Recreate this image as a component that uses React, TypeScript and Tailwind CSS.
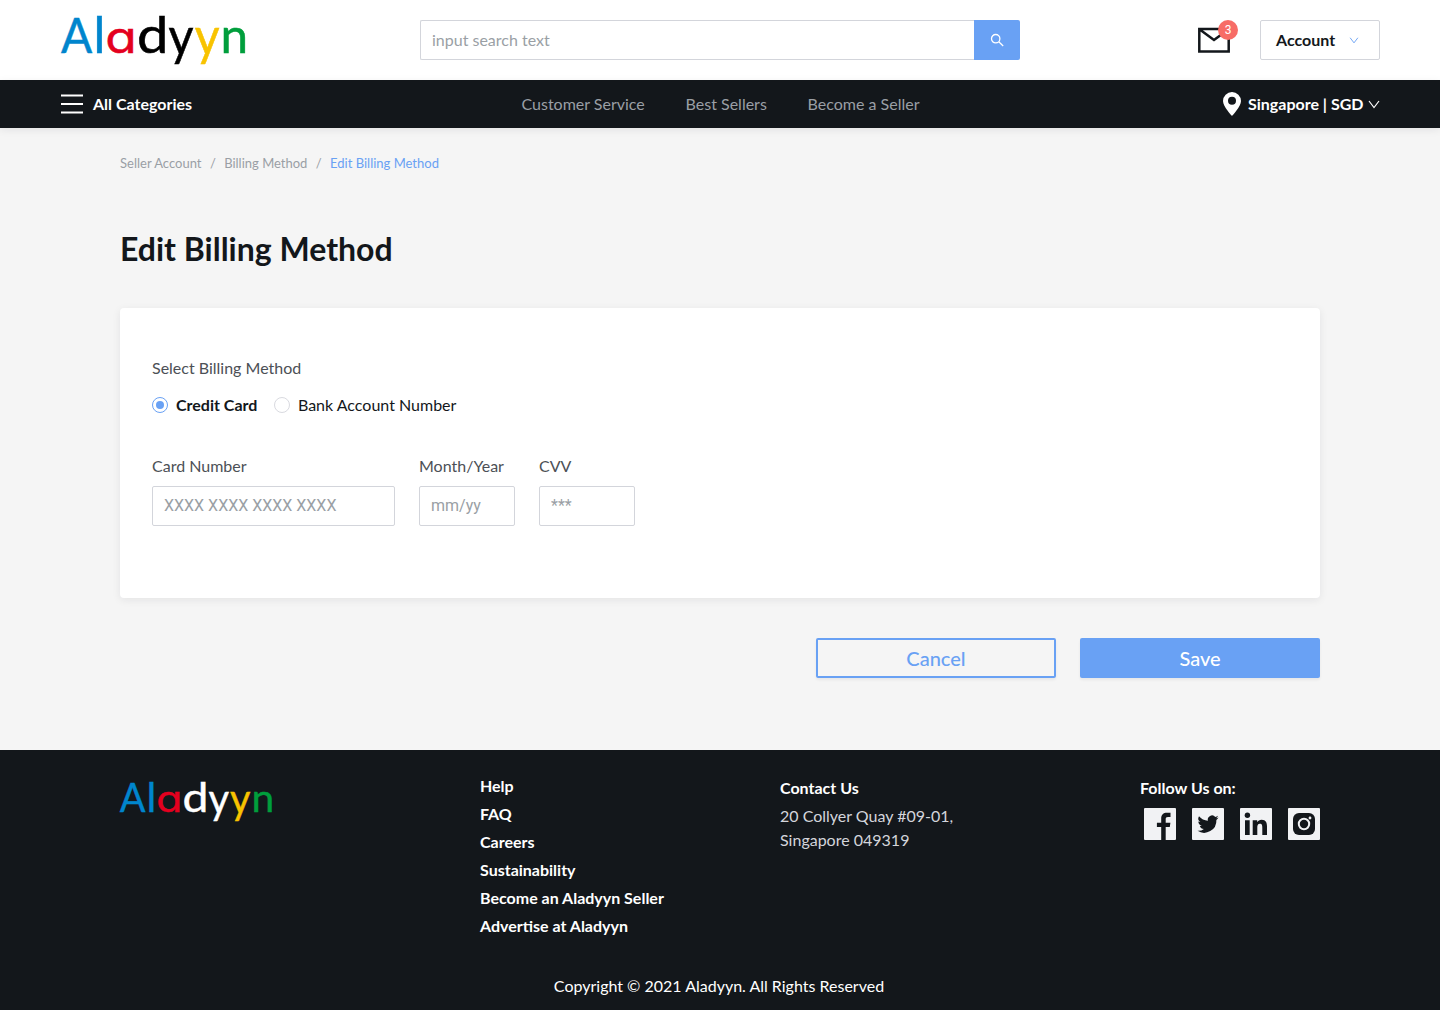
import React from "react";

type Letter = { ch: string; x: number; y: number; sx: number; sy: number; color: string; round?: boolean };

const letters: Letter[] = [
  { ch: "A", x: 76.5, y: 52.5, sx: 0.96, sy: 1.02, color: "#0085cd" },
  { ch: "l", x: 99.4, y: 52.5, sx: 1.05, sy: 1.035, color: "#0085cd" },
  { ch: "a", x: 121, y: 52.5, sx: 1.17, sy: 1, color: "#e4001f", round: true },
  { ch: "d", x: 152.7, y: 52.5, sx: 1.17, sy: 1.03, color: "ink" },
  { ch: "y", x: 181, y: 54.8, sx: 1.01, sy: 1.095, color: "ink" },
  { ch: "y", x: 207, y: 54.8, sx: 1, sy: 1.095, color: "#f8c300" },
  { ch: "n", x: 234.4, y: 52.5, sx: 1.03, sy: 1, color: "#009e3c" },
];

function Logo({ ink, className }: { ink: string; className: string }) {
  return (
    <svg viewBox="60 0 188 80" className={`overflow-visible ${className}`} role="img" aria-label="Aladyyn">
      {letters.map((l, i) => (
        <text
          key={i}
          transform={`translate(${l.x} ${l.y}) scale(${l.sx} ${l.sy})`}
          textAnchor="middle"
          fontSize={l.round ? 44 : 48}
          fill={l.color === "ink" ? ink : l.color}
          stroke={l.color === "ink" ? ink : l.color}
          strokeWidth={0.5}
          className={
            l.round
              ? "font-['Inter',sans-serif] [font-feature-settings:'cv11']"
              : "font-['Lato',sans-serif]"
          }
        >
          {l.ch}
        </text>
      ))}
    </svg>
  );
}

function Chevron({ className }: { className: string }) {
  return (
    <svg viewBox="0 0 12 9" fill="none" stroke="currentColor" className={className}>
      <path d="M1 1 6 7.500 11 1" strokeWidth="1.2" />
    </svg>
  );
}

function Field({ label, hint, className }: { label: string; hint: string; className: string }) {
  return (
    <label className={`block ${className}`}>
      <span className="block leading-6 text-[#4c5056]">{label}</span>
      <input
        placeholder={hint}
        className="mt-2 block h-10 w-full rounded-[2px] border border-[#d3d5db] bg-white px-[11px] pb-px font-['Roboto',sans-serif] outline-none placeholder:text-[#9a9fa5]"
      />
    </label>
  );
}

const socials = [
  <path key="f" d="M17.200 32V19h-4.300v-4.300h4.300v-4C17.200 6.500 19.500 4.800 22.800 4.800h3.700v4.100H24c-1.800 0-2.300.8-2.300 2.300v3.500h4.700l-.6 4.300h-4.100v13z" />,
  <path key="t" d="M26.600 9.500c-.8.350-1.600.6-2.500.7a4.300 4.300 0 0 0 1.900-2.400c-.8.500-1.800.9-2.700 1.100a4.300 4.300 0 0 0-7.400 3.900A12.300 12.300 0 0 1 7 8.300a4.300 4.300 0 0 0 1.300 5.800c-.7 0-1.400-.2-2-.5 0 2.100 1.500 3.900 3.500 4.300-.6.200-1.300.2-2 .1a4.300 4.300 0 0 0 4.100 3A8.700 8.700 0 0 1 5.500 22.800a12.300 12.300 0 0 0 18.900-10.900c.9-.6 1.600-1.400 2.200-2.400z" />,
  <g key="l">
    <circle cx="7.400" cy="7.300" r="2.700" />
    <path d="M5 12.200h4.700V27H5zM12.700 12.200h4.500v2c.8-1.500 2.300-2.400 4.400-2.400 4.400 0 5.400 2.900 5.400 7V27h-4.700v-7.300c0-1.800-.1-3.900-2.400-3.900s-2.600 1.900-2.600 3.800V27h-4.600z" />
  </g>,
  <g key="i">
    <rect x="5" y="5" width="22" height="22" rx="6" />
    <circle cx="16" cy="16" r="5.200" fill="none" stroke="#f1f2f4" strokeWidth="2" />
    <circle cx="22" cy="10" r="1.400" fill="#f1f2f4" />
  </g>,
];

export default function App() {
  return (
    <div className="flex h-[1010px] w-[1440px] flex-col bg-[#f5f5f5] font-['Lato',sans-serif] text-base text-[#13171b]">
      <header className="flex h-20 shrink-0 items-center bg-white px-[60px]">
        <Logo ink="#000000" className="h-20 w-[188px]" />
        <div className="ml-[172px] flex h-10 w-[600px]">
          <input
            placeholder="input search text"
            className="w-[554px] rounded-l-[2px] border border-r-0 border-[#d3d5db] px-[11px] outline-none placeholder:text-[#9a9fa5]"
          />
          <button className="flex w-[46px] items-center justify-center rounded-r-[2px] bg-[#69a1f4] text-white">
            <svg viewBox="0 0 14 14" className="size-3.5" fill="none" stroke="currentColor" strokeWidth="1.300">
              <circle cx="5.700" cy="5.700" r="4.200" />
              <path d="m8.800 8.800 4.400 4.200" />
            </svg>
          </button>
        </div>
        <div className="relative ml-[178px] h-[26px] w-8">
          <svg viewBox="0 0 32 26" className="h-[26px] w-8" fill="none" stroke="#13171b" strokeWidth="2.500">
            <path d="M1.300 1.900h29.400v22.700H1.300zM1.400 2.200 16 13 30.600 2.200" />
          </svg>
          <span className="absolute -top-[7px] left-5 flex size-5 items-center justify-center rounded-full bg-[#f76c66] font-['Roboto',sans-serif] text-xs text-white">
            3
          </span>
        </div>
        <button className="ml-[30px] flex h-10 w-[120px] items-center rounded-[2px] border border-[#d3d5db] pl-[15px] font-bold">
          Account
          <Chevron className="ml-[14px] h-[7px] w-[10px] text-[#69a1f4]" />
        </button>
      </header>

      <nav className="grid h-12 shrink-0 grid-cols-[1fr_auto_1fr] items-center bg-[#13171b] px-[60px] text-white shadow-[0_2px_8px_rgba(20,23,40,0.08)]">
        <div className="flex items-center font-bold">
          <svg viewBox="0 0 24 20" className="mr-[9px] h-5 w-6" stroke="currentColor" strokeWidth="2">
            <path d="M1 1.500h22M1 10h22M1 18.500h22" />
          </svg>
          All Categories
        </div>
        <div className="flex gap-[40.800px] pl-px text-[#9a9fa5]">
          <span>Customer Service</span>
          <span>Best Sellers</span>
          <span>Become a Seller</span>
        </div>
        <div className="flex items-center justify-end font-bold">
          <svg viewBox="0 0 18 24" className="mr-[7px] h-6 w-[18px]" fill="currentColor">
            <path fillRule="evenodd" d="M9 0a9 9 0 0 0-9 9c0 5.500 9 15 9 15s9-9.500 9-15a9 9 0 0 0-9-9zm0 4.800a4 4 0 1 1 0 8 4 4 0 0 1 0-8z" />
          </svg>
          Singapore | SGD
          <Chevron className="ml-[4.500px] h-[9px] w-3" />
        </div>
      </nav>

      <main className="flex-1 px-[120px] pt-[25px]">
        <div className="flex gap-[8.400px] text-[13px] leading-5 text-[#9a9fa5]">
          <span>Seller Account</span>
          <span>/</span>
          <span>Billing Method</span>
          <span>/</span>
          <span className="text-[#69a1f4]">Edit Billing Method</span>
        </div>
        <h1 className="mt-14 text-[32px] font-bold leading-10">Edit Billing Method</h1>
        <section className="mt-[39px] h-[290px] rounded bg-white px-8 pt-12 shadow-[0_2px_8px_rgba(20,23,40,0.08)]">
          <p className="leading-6 text-[#4c5056]">Select Billing Method</p>
          <div className="mt-[13px] flex items-center leading-6">
            <span className="mr-2 flex size-4 items-center justify-center rounded-full border border-[#69a1f4]">
              <span className="size-2 rounded-full bg-[#69a1f4]" />
            </span>
            <span className="font-bold">Credit Card</span>
            <span className="mr-2 ml-[16.600px] size-4 rounded-full border border-[#d9dae0]" />
            <span>Bank Account Number</span>
          </div>
          <div className="mt-[37px] flex gap-6">
            <Field label="Card Number" hint="XXXX XXXX XXXX XXXX" className="w-[243px]" />
            <Field label="Month/Year" hint="mm/yy" className="w-24" />
            <Field label="CVV" hint="***" className="w-24" />
          </div>
        </section>
        <div className="mt-10 flex justify-end gap-6 text-xl font-medium">
          <button className="h-10 w-60 rounded-[2px] border-2 border-[#69a1f4] text-[#69a1f4] shadow-[0_2px_3px_rgba(20,23,40,0.06)]">
            Cancel
          </button>
          <button className="h-10 w-60 rounded-[2px] bg-[#69a1f4] text-white shadow-[0_2px_3px_rgba(20,23,40,0.06)]">
            Save
          </button>
        </div>
      </main>

      <footer className="flex h-[260px] shrink-0 flex-col bg-[#13171b] px-[120px] text-white">
        <div className="flex h-[224px]">
          <div className="w-[360px] pt-[19px]">
            <Logo ink="#ffffff" className="-ml-px h-[66px] w-[155px]" />
          </div>
          <ul className="w-[300px] space-y-1 pt-6 font-bold leading-6">
            <li>Help</li>
            <li>FAQ</li>
            <li>Careers</li>
            <li>Sustainability</li>
            <li>Become an Aladyyn Seller</li>
            <li>Advertise at Aladyyn</li>
          </ul>
          <div className="w-[360px] pt-[26px] leading-6">
            <h2 className="font-bold">Contact Us</h2>
            <p className="mt-1 text-[#d3d5db]">
              20 Collyer Quay #09-01,
              <br />
              Singapore 049319
            </p>
          </div>
          <div className="pt-[26px] leading-6">
            <h2 className="font-bold">Follow Us on:</h2>
            <div className="mt-2 ml-1 flex gap-4">
              {socials.map((icon, i) => (
                <svg key={i} viewBox="0 0 32 32" className="size-8 rounded-[1px] bg-[#f1f2f4]" fill="#13171b">
                  {icon}
                </svg>
              ))}
            </div>
          </div>
        </div>
        <p className="pr-0.5 text-center leading-6">Copyright © 2021 Aladyyn. All Rights Reserved</p>
      </footer>
    </div>
  );
}
